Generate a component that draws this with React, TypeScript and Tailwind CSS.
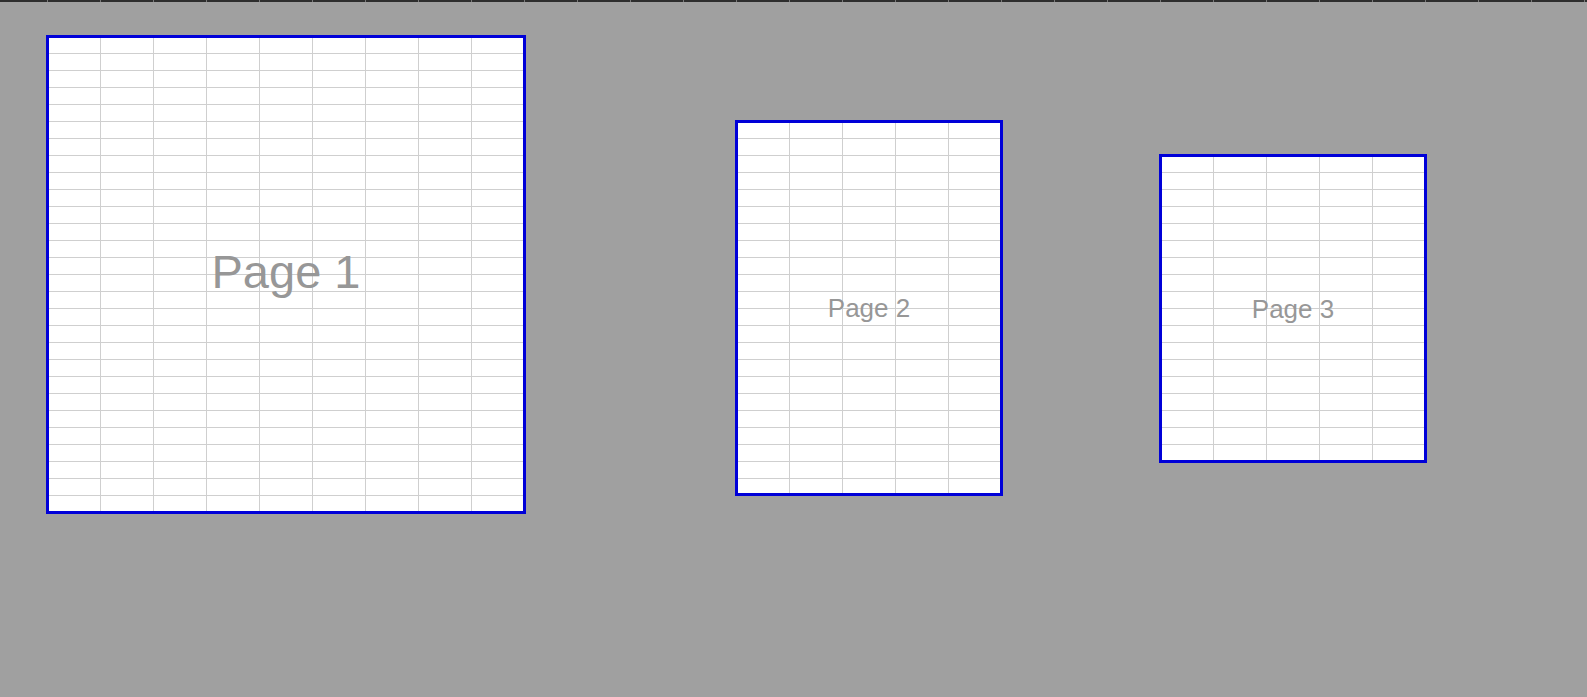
import React from 'react';

const gridBg =
  'bg-white bg-fixed bg-[linear-gradient(to_right,#cfcfcf_1px,transparent_1px),linear-gradient(to_bottom,#cfcfcf_1px,transparent_1px)] bg-[length:53px_17px] bg-[position:47px_36px]';

type PageProps = {
  label: string;
  className: string;
  textClass: string;
};

const Page: React.FC<PageProps> = ({ label, className, textClass }) => (
  <div
    className={`shrink-0 border-[3px] border-[#0000d8] flex items-center justify-center ${gridBg} ${className}`}
  >
    <span className={`text-[#979797] leading-none font-['Liberation_Sans',Arial,sans-serif] ${textClass}`}>
      {label}
    </span>
  </div>
);

export default function App() {
  const headerCells = Array.from({ length: 30 });

  return (
    <div className="w-[1587px] h-[697px] bg-[#a0a0a0] overflow-hidden flex flex-col">
      <div className="h-[2px] flex shrink-0 bg-[#2e2e2e]">
        <div className="w-[47px] shrink-0" />
        {headerCells.map((_, i) => (
          <div key={i} className="w-[53px] shrink-0 border-l border-[#7a7a7a]" />
        ))}
      </div>

      <div className="flex items-start pl-[46px]">
        <Page label="Page 1" className="w-[480px] h-[479px] mt-[33px]" textClass="text-[47px] -mt-[6px]" />
        <Page label="Page 2" className="w-[268px] h-[376px] mt-[118px] ml-[209px]" textClass="text-[26px]" />
        <Page label="Page 3" className="w-[268px] h-[309px] mt-[152px] ml-[156px]" textClass="text-[26px]" />
      </div>
    </div>
  );
}
